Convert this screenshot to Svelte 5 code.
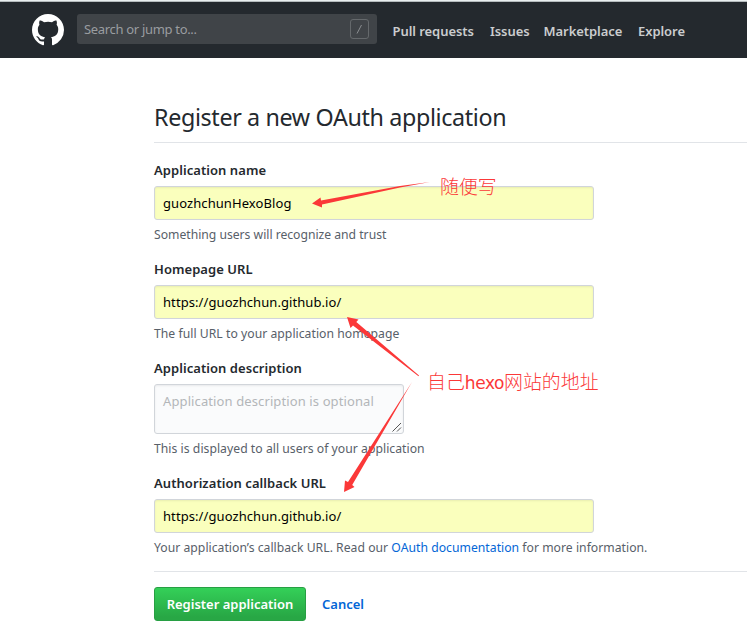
<script>
  const nav = [
    { label: 'Pull requests', width: 82 },
    { label: 'Issues', width: 38 },
    { label: 'Marketplace', width: 79 },
    { label: 'Explore', width: 48 }
  ];
</script>

<div class="page">
  <div class="edge"></div>
  <header>
    <svg class="logo" viewBox="0 0 16 16" width="32" height="32" aria-hidden="true">
      <path fill="#fff" fill-rule="evenodd" d="M8 0C3.58 0 0 3.58 0 8c0 3.54 2.29 6.53 5.47 7.59.4.07.55-.17.55-.38 0-.19-.01-.82-.01-1.49-2.01.37-2.53-.49-2.69-.94-.09-.23-.48-.94-.82-1.13-.28-.15-.68-.52-.01-.53.63-.01 1.08.58 1.23.82.72 1.21 1.87.87 2.33.66.07-.52.28-.87.51-1.07-1.78-.2-3.64-.89-3.64-3.95 0-.87.31-1.59.82-2.15-.08-.2-.36-1.02.08-2.12 0 0 .67-.21 2.2.82.64-.18 1.32-.27 2-.27.68 0 1.36.09 2 .27 1.53-1.04 2.2-.82 2.2-.82.44 1.1.16 1.92.08 2.12.51.56.82 1.27.82 2.15 0 3.07-1.87 3.75-3.65 3.95.29.25.54.73.54 1.48 0 1.07-.01 1.93-.01 2.2 0 .21.15.46.55.38A8.013 8.013 0 0 0 16 8c0-4.42-3.58-8-8-8z" />
    </svg>
    <div class="search"><span>Search or jump to...</span><kbd><svg width="19" height="20"><path d="M7 14.5 11.5 6" stroke="#8b8e91" fill="none" /></svg></kbd></div>
    <nav>
      {#each nav as item}
        <a href="#top" style:width="{item.width}px">{item.label}</a>
      {/each}
    </nav>
  </header>

  <main>
    <h1>Register a new OAuth application</h1>
    <section>
      <h2>Application name</h2>
      <div class="field">guozhchunHexoBlog</div>
      <p class="short">Something users will recognize and trust</p>
    </section>
    <section>
      <h2>Homepage URL</h2>
      <div class="field">https://guozhchun.github.io/</div>
      <p>The full URL to your application homepage</p>
    </section>
    <section class="description">
      <h2>Application description</h2>
      <div class="field area">Application description is optional
        <svg width="10" height="10"><path d="M0.5 9.5 9 1M5 9.5 9 5.5" stroke="#555" fill="none" /></svg>
      </div>
      <p>This is displayed to all users of your application</p>
    </section>
    <section class="callback">
      <h2>Authorization callback URL</h2>
      <div class="field">https://guozhchun.github.io/</div>
      <p class="long">Your application’s callback URL. Read our <a href="#docs">OAuth documentation</a> for more information.</p>
    </section>
    <div class="actions">
      <button>Register application</button>
      <a href="#cancel">Cancel</a>
    </div>
  </main>

  <svg class="arrows" width="747" height="631" fill="#fb3838" aria-hidden="true">
    <path d="M312 203.5 320.5 197.5 321 200.6 400 186 430 182 400 187.5 322 204.4 322 207.5Z" />
    <path d="M347 317 358.5 319.5 356.3 322 419 375.5 418.5 376.3 353 325.5 350.5 328Z" />
    <path d="M344 492 345 480.5 348 482 412 382 352.2 485 354.5 487Z" />
  </svg>
  <div class="remark first">随便写</div>
  <div class="remark second">自己<span>hexo</span>网站的地址</div>
</div>

<style>
  :global(body) { margin: 0; background: #fff; }
  .page { position: relative; width: 747px; height: 631px; overflow: hidden; background: #fff; color: #24292e; font-family: "Noto Sans", "Open Sans", sans-serif; font-size: 14px; white-space: nowrap; }
  .edge { height: 1px; background: #e9eeef; border-bottom: 1px solid #b5bbbd; }
  header { height: 56px; box-sizing: border-box; padding: 12px 0 14px 32px; display: flex; background: #24292e; }
  .search { margin-left: 13px; width: 300px; height: 30px; box-sizing: border-box; padding: 0 8px 0 7px; display: flex; align-items: center; justify-content: space-between; border-radius: 3px; background: #404448; color: #9a9da0; font-size: 13px; letter-spacing: -.32px; }
  kbd { box-sizing: border-box; width: 19px; height: 20px; border: 1px solid #65696c; border-radius: 3px; }
  kbd svg { display: block; margin: -1px; }
  nav { display: flex; gap: 15.5px; margin-left: 15.5px; padding-top: 5px; line-height: 25px; }
  nav a { color: #cbcdce; font-weight: 600; font-size: 13px; letter-spacing: -.06px; text-decoration: none; }
  main { padding: 39px 0 0 154px; }
  h1 { margin: 0 0 15px; height: 45px; border-bottom: 1px solid #e1e4e8; font-weight: 400; font-size: 23.3px; letter-spacing: -.36px; line-height: 41px; }
  section { height: 99px; }
  .description { height: 115px; }
  .callback { height: 100px; }
  h2 { margin: 0; height: 28px; line-height: 24px; font-size: 13px; font-weight: 600; letter-spacing: .06px; }
  .field { position: relative; box-sizing: border-box; width: 440px; height: 34px; padding: 0 8px; border: 1px solid #d1d5da; border-radius: 3px; background: #faffbd; color: #000; line-height: 32px; box-shadow: inset 0 1px 2px rgba(27, 31, 35, .075); font-size: 13px; letter-spacing: .08px; }
  .area { width: 250px; height: 50px; background: #fafbfc; color: #b3b6b9; letter-spacing: .11px; }
  .area svg { position: absolute; right: 1px; bottom: 1px; }
  p { margin: 5px 0 0; font-size: 12.2px; line-height: 20px; letter-spacing: .03px; color: #586069; }
  .short { letter-spacing: -.02px; }
  .long { letter-spacing: .02px; }
  a { color: #0366d6; text-decoration: none; }
  .actions { display: flex; align-items: center; padding-top: 15px; border-top: 1px solid #e1e4e8; }
  button { box-sizing: border-box; width: 152px; height: 34px; padding: 0; border: 1px solid #279f43; border-radius: 3px; background: linear-gradient(#34d058, #28a745 90%); color: #fff; font: 600 13px "Noto Sans", sans-serif; }
  .actions a { margin-left: 16px; font-weight: 600; font-size: 13px; }
  .arrows { position: absolute; left: 0; top: 0; }
  .remark { position: absolute; color: #fb3838; font-family: "Noto Sans CJK SC", sans-serif; font-weight: 300; font-size: 18.9px; line-height: 24px; }
  .remark span { font-family: "DejaVu Sans", sans-serif; font-weight: 400; font-size: 17px; letter-spacing: -.4px; }
  .first { left: 440px; top: 174px; }
  .second { left: 427px; top: 369px; }
</style>
